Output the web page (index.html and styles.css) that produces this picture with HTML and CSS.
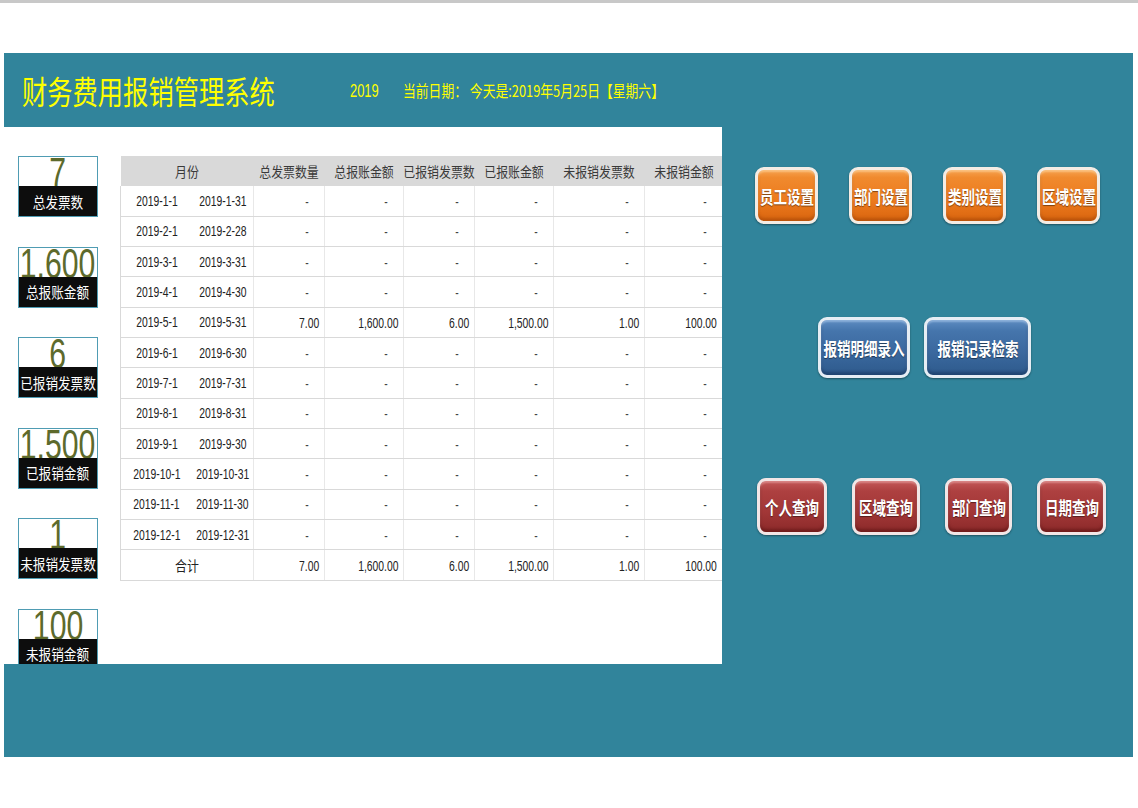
FILE: index.html
```html
<!DOCTYPE html>
<html lang="zh-CN">
<head>
<meta charset="utf-8">
<title>财务费用报销管理系统</title>
<link rel="stylesheet" href="styles.css">
</head>
<body>
<div class="topbar"></div>
<main class="board">
  <header class="head">
    <h1 class="title"><span class="sq">财务费用报销管理系统</span></h1>
    <span class="year"><span class="sq">2019</span></span>
    <span class="date"><span class="sq">当前日期：&nbsp;今天是:2019年5月25日【星期六】</span></span>
  </header>
  <div class="body">
    <section class="sheet">
      <div class="kpis">
        <div class="kpi"><div class="kpi-num"><span>7</span></div><div class="kpi-label"><span>总发票数</span></div></div>
        <div class="kpi"><div class="kpi-num"><span>1,600</span></div><div class="kpi-label"><span>总报账金额</span></div></div>
        <div class="kpi"><div class="kpi-num"><span>6</span></div><div class="kpi-label"><span>已报销发票数</span></div></div>
        <div class="kpi"><div class="kpi-num"><span>1,500</span></div><div class="kpi-label"><span>已报销金额</span></div></div>
        <div class="kpi"><div class="kpi-num"><span>1</span></div><div class="kpi-label"><span>未报销发票数</span></div></div>
        <div class="kpi"><div class="kpi-num"><span>100</span></div><div class="kpi-label"><span>未报销金额</span></div></div>
      </div>
      <table class="grid">
        <colgroup>
          <col class="w-a"><col class="w-b"><col class="w-c"><col class="w-d"><col class="w-c"><col class="w-d"><col class="w-e"><col class="w-f">
        </colgroup>
        <thead>
          <tr>
            <th colspan="2"><div class="hc"><span class="c">月份</span></div></th>
            <th><div class="hc"><span class="c">总发票数量</span></div></th>
            <th><div class="hc"><span class="c">总报账金额</span></div></th>
            <th><div class="hc"><span class="c">已报销发票数</span></div></th>
            <th><div class="hc"><span class="c">已报账金额</span></div></th>
            <th><div class="hc"><span class="c">未报销发票数</span></div></th>
            <th><div class="hc"><span class="c">未报销金额</span></div></th>
          </tr>
        </thead>
        <tbody>
          <tr><td class="da"><div class="dc"><span class="n">2019-1-1</span></div></td><td class="db"><div class="dc"><span class="n">2019-1-31</span></div></td><td><span class="n dash">-</span></td><td><span class="n dash">-</span></td><td><span class="n dash">-</span></td><td><span class="n dash">-</span></td><td><span class="n dash">-</span></td><td><span class="n dash">-</span></td></tr>
          <tr><td class="da"><div class="dc"><span class="n">2019-2-1</span></div></td><td class="db"><div class="dc"><span class="n">2019-2-28</span></div></td><td><span class="n dash">-</span></td><td><span class="n dash">-</span></td><td><span class="n dash">-</span></td><td><span class="n dash">-</span></td><td><span class="n dash">-</span></td><td><span class="n dash">-</span></td></tr>
          <tr><td class="da"><div class="dc"><span class="n">2019-3-1</span></div></td><td class="db"><div class="dc"><span class="n">2019-3-31</span></div></td><td><span class="n dash">-</span></td><td><span class="n dash">-</span></td><td><span class="n dash">-</span></td><td><span class="n dash">-</span></td><td><span class="n dash">-</span></td><td><span class="n dash">-</span></td></tr>
          <tr><td class="da"><div class="dc"><span class="n">2019-4-1</span></div></td><td class="db"><div class="dc"><span class="n">2019-4-30</span></div></td><td><span class="n dash">-</span></td><td><span class="n dash">-</span></td><td><span class="n dash">-</span></td><td><span class="n dash">-</span></td><td><span class="n dash">-</span></td><td><span class="n dash">-</span></td></tr>
          <tr><td class="da"><div class="dc"><span class="n">2019-5-1</span></div></td><td class="db"><div class="dc"><span class="n">2019-5-31</span></div></td><td><span class="n">7.00</span></td><td><span class="n">1,600.00</span></td><td><span class="n">6.00</span></td><td><span class="n">1,500.00</span></td><td><span class="n">1.00</span></td><td><span class="n">100.00</span></td></tr>
          <tr><td class="da"><div class="dc"><span class="n">2019-6-1</span></div></td><td class="db"><div class="dc"><span class="n">2019-6-30</span></div></td><td><span class="n dash">-</span></td><td><span class="n dash">-</span></td><td><span class="n dash">-</span></td><td><span class="n dash">-</span></td><td><span class="n dash">-</span></td><td><span class="n dash">-</span></td></tr>
          <tr><td class="da"><div class="dc"><span class="n">2019-7-1</span></div></td><td class="db"><div class="dc"><span class="n">2019-7-31</span></div></td><td><span class="n dash">-</span></td><td><span class="n dash">-</span></td><td><span class="n dash">-</span></td><td><span class="n dash">-</span></td><td><span class="n dash">-</span></td><td><span class="n dash">-</span></td></tr>
          <tr><td class="da"><div class="dc"><span class="n">2019-8-1</span></div></td><td class="db"><div class="dc"><span class="n">2019-8-31</span></div></td><td><span class="n dash">-</span></td><td><span class="n dash">-</span></td><td><span class="n dash">-</span></td><td><span class="n dash">-</span></td><td><span class="n dash">-</span></td><td><span class="n dash">-</span></td></tr>
          <tr><td class="da"><div class="dc"><span class="n">2019-9-1</span></div></td><td class="db"><div class="dc"><span class="n">2019-9-30</span></div></td><td><span class="n dash">-</span></td><td><span class="n dash">-</span></td><td><span class="n dash">-</span></td><td><span class="n dash">-</span></td><td><span class="n dash">-</span></td><td><span class="n dash">-</span></td></tr>
          <tr><td class="da"><div class="dc"><span class="n">2019-10-1</span></div></td><td class="db"><div class="dc"><span class="n">2019-10-31</span></div></td><td><span class="n dash">-</span></td><td><span class="n dash">-</span></td><td><span class="n dash">-</span></td><td><span class="n dash">-</span></td><td><span class="n dash">-</span></td><td><span class="n dash">-</span></td></tr>
          <tr><td class="da"><div class="dc"><span class="n">2019-11-1</span></div></td><td class="db"><div class="dc"><span class="n">2019-11-30</span></div></td><td><span class="n dash">-</span></td><td><span class="n dash">-</span></td><td><span class="n dash">-</span></td><td><span class="n dash">-</span></td><td><span class="n dash">-</span></td><td><span class="n dash">-</span></td></tr>
          <tr><td class="da"><div class="dc"><span class="n">2019-12-1</span></div></td><td class="db"><div class="dc"><span class="n">2019-12-31</span></div></td><td><span class="n dash">-</span></td><td><span class="n dash">-</span></td><td><span class="n dash">-</span></td><td><span class="n dash">-</span></td><td><span class="n dash">-</span></td><td><span class="n dash">-</span></td></tr>
          <tr class="total"><td colspan="2" class="da"><div class="dc"><span class="c">合计</span></div></td><td><span class="n">7.00</span></td><td><span class="n">1,600.00</span></td><td><span class="n">6.00</span></td><td><span class="n">1,500.00</span></td><td><span class="n">1.00</span></td><td><span class="n">100.00</span></td></tr>
        </tbody>
      </table>
    </section>
    <aside class="actions">
      <div class="btn-row row-orange">
        <button class="btn orange"><span>员工设置</span></button>
        <button class="btn orange"><span>部门设置</span></button>
        <button class="btn orange"><span>类别设置</span></button>
        <button class="btn orange"><span>区域设置</span></button>
      </div>
      <div class="btn-row row-blue">
        <button class="btn blue b1"><span>报销明细录入</span></button>
        <button class="btn blue b2"><span>报销记录检索</span></button>
      </div>
      <div class="btn-row row-red">
        <button class="btn red r1"><span>个人查询</span></button>
        <button class="btn red r2"><span>区域查询</span></button>
        <button class="btn red r3"><span>部门查询</span></button>
        <button class="btn red r4"><span>日期查询</span></button>
      </div>
    </aside>
  </div>
</main>
</body>
</html>
```

FILE: styles.css
```css
* { box-sizing: border-box; }
html, body { margin: 0; padding: 0; background: #fff; }
body {
  width: 1138px;
  height: 808px;
  overflow: hidden;
  font-family: "Noto Sans CJK SC", "Liberation Sans", sans-serif;
}
.topbar { height: 3px; background: #c8c8c8; }

.board {
  margin: 50px 0 0 4px;
  width: 1129px;
  height: 704px;
  background: #31849b;
  display: flex;
  flex-direction: column;
}

/* header */
.head {
  height: 74px;
  display: flex;
  align-items: center;
  padding: 0 0 0 18px;
  color: #ffff00;
}
.sq { display: inline-block; white-space: nowrap; transform-origin: left center; }
.title {
  margin: 0;
  width: 328px;
  font-size: 32px;
  font-weight: normal;
  line-height: 1;
}
.title .sq { transform: scaleX(.79); }
.year {
  width: 53px;
  font-family: "Liberation Sans", sans-serif;
  font-size: 19px;
  padding-top: 2px;
}
.year .sq { transform: scaleX(.68); }
.date { font-size: 16px; }
.date .sq { transform: scaleX(.8); }

/* body */
.body { display: flex; height: 537px; }
.sheet {
  width: 718px;
  height: 537px;
  background: #fff;
  padding: 29px 0 0 14px;
  display: flex;
  align-items: flex-start;
  gap: 22px;
  overflow: hidden;
}

/* KPI boxes */
.kpis { width: 80px; flex: none; display: flex; flex-direction: column; gap: 29.5px; }
.kpi {
  height: 61px;
  border: 1px solid #4f9cb3;
  display: flex;
  flex-direction: column;
  flex: none;
}
.kpi-num {
  height: 29px;
  overflow: hidden;
  display: flex;
  justify-content: center;
  align-items: flex-start;
  background: #fff;
  color: #5d6a2c;
  font-family: "Liberation Sans", sans-serif;
  font-size: 42px;
  line-height: 32px;
}
.kpi-num span { display: inline-block; transform: scaleX(.72); white-space: nowrap; }
.kpi-label {
  flex: 1;
  background: #0d0d0d;
  color: #fff;
  display: flex;
  justify-content: center;
  align-items: center;
  font-size: 15px;
  line-height: 1;
}
.kpi-label span { display: inline-block; transform: scaleX(.84); white-space: nowrap; }

/* table */
.grid {
  width: 602px;
  flex: none;
  border-collapse: collapse;
  table-layout: fixed;
}
.w-a { width: 72px; }
.w-b { width: 61px; }
.w-c { width: 71px; }
.w-d { width: 79px; }
.w-e { width: 91px; }
.w-f { width: 78px; }
.grid th {
  height: 30px;
  padding: 0;
  background: #d9d9d9;
  color: #3a3a3a;
  font-weight: normal;
  font-size: 14px;
}
.hc, .dc { display: flex; justify-content: center; align-items: center; white-space: nowrap; }
.c { display: inline-block; transform: scaleX(.85); white-space: nowrap; }
.grid tbody tr { height: 30.33px; }
.grid td {
  padding: 0 5px 0 0;
  text-align: right;
  font-size: 14px;
  color: #222;
  border-bottom: 1px solid #d9d9d9;
  border-right: 1px solid #e8e8e8;
  white-space: nowrap;
}
.grid td.da { border-left: 1px solid #d9d9d9; border-right: none; padding: 0; }
.grid td.db { padding: 0; }
.grid tr.total td.da { border-right: 1px solid #e8e8e8; }
.n {
  display: inline-block;
  font-family: "Liberation Sans", sans-serif;
  transform: scaleX(.74);
  transform-origin: right center;
}
.dc .n { transform-origin: center center; }
.dash { margin-right: 10px; color: #444; }

/* right side buttons */
.actions { flex: 1; display: flex; flex-direction: column; }
.btn-row { display: flex; }
.row-orange { margin-top: 40px; padding-left: 33px; gap: 31px; }
.row-blue { margin-top: 93px; padding-left: 96px; gap: 14px; }
.row-red { margin-top: 100px; padding-left: 35px; gap: 25px; }

.btn {
  flex: none;
  display: flex;
  align-items: center;
  justify-content: center;
  padding: 0;
  border-radius: 9px;
  border: 3px solid #f4ece4;
  color: #fff;
  font-family: "Noto Sans CJK SC", sans-serif;
  font-weight: bold;
  font-size: 18px;
  line-height: 1;
  text-shadow: 0 1px 1px rgba(0,0,0,.45);
  overflow: visible;
}
.btn span { display: inline-block; transform: scaleX(.75); white-space: nowrap; }
.orange {
  width: 63px;
  height: 57px;
  background: linear-gradient(#f6a24e 0%, #f08a2e 15%, #ec7a1d 60%, #d9650f 100%);
  box-shadow: inset 0 -3px 3px rgba(130,50,0,.35), inset 0 2px 2px rgba(255,220,170,.55), 0 1px 2px rgba(0,0,0,.4);
}
.blue {
  height: 61px;
  border-color: #e6edf4;
  background: linear-gradient(#5d8cc2 0%, #4575ac 20%, #3a689e 60%, #2e5a8c 100%);
  box-shadow: inset 0 -3px 3px rgba(10,30,60,.35), inset 0 2px 2px rgba(190,215,245,.5), 0 1px 2px rgba(0,0,0,.4);
}
.b1 { width: 92px; }
.b2 { width: 107px; }
.red {
  height: 57px;
  border-color: #f2e6e6;
  background: linear-gradient(#c45858 0%, #ad4040 20%, #a23737 60%, #8c2a2a 100%);
  box-shadow: inset 0 -3px 3px rgba(60,0,0,.35), inset 0 2px 2px rgba(240,180,180,.5), 0 1px 2px rgba(0,0,0,.4);
}
.r1 { width: 70px; }
.r2 { width: 68px; }
.r3 { width: 67px; }
.r4 { width: 69px; }
```
